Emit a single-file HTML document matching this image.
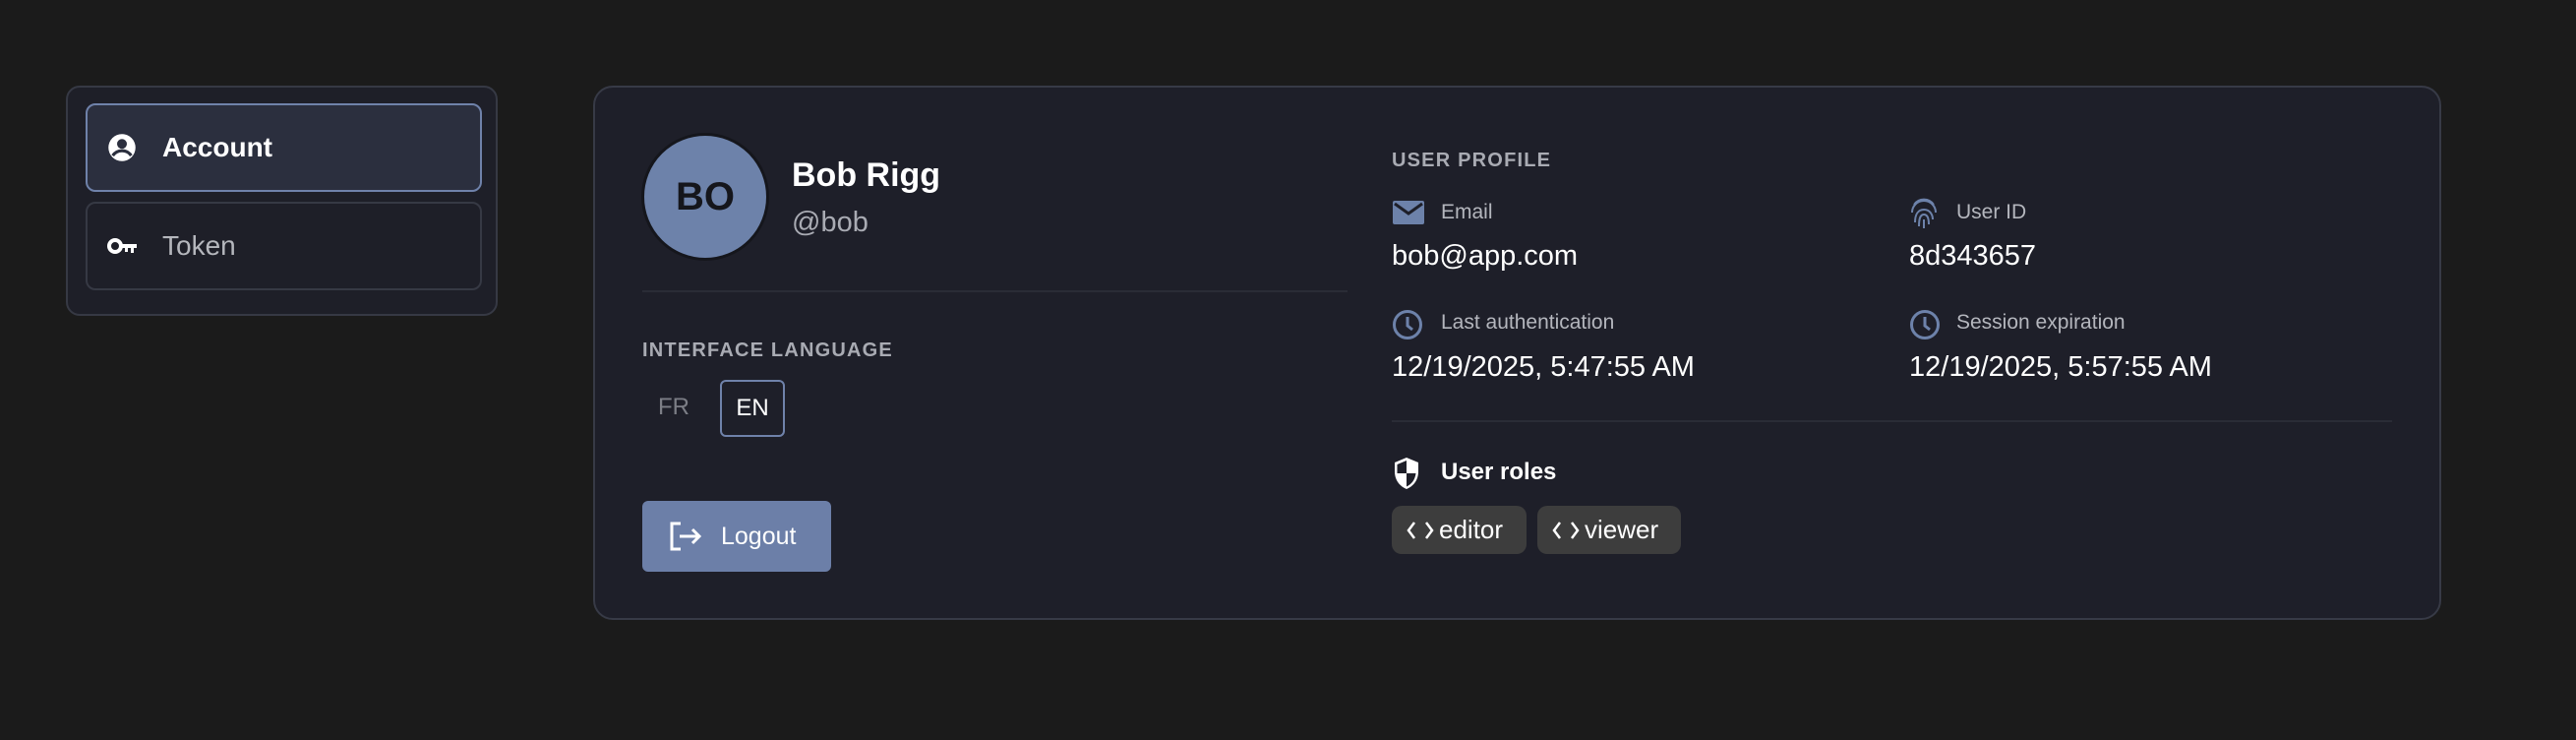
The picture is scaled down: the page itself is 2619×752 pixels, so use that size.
<!DOCTYPE html>
<html><head><style>
*{box-sizing:border-box;margin:0;padding:0}
body{width:2619px;height:752px;background:#1b1b1b;font-family:"Liberation Sans",sans-serif;color:#fff;position:relative;overflow:hidden}
.abs{position:absolute}
.side{left:67px;top:87px;width:439px;height:234px;background:#1e1f28;border:2px solid #363944;border-radius:14px}
.item{position:absolute;left:18px;width:403px;height:90px;border-radius:10px;border:2px solid #363944;display:flex;align-items:center;padding-left:20px;font-size:28px}
.card{left:603px;top:87px;width:1879px;height:543px;background:#1e1f29;border:2px solid #373a46;border-radius:20px}
.lbl{font-size:20px;color:#a9abb3;letter-spacing:1.2px;font-weight:bold}
.sm{font-size:21px;color:#b4b6bd}
.val{font-size:29px;color:#fff}
.chip{position:absolute;top:514px;height:49px;background:#3d3d3d;border-radius:10px;font-size:26px;display:flex;align-items:center;padding-left:14px}
.chip svg{margin-right:4px}
</style></head><body>
<div class="abs side">
 <div class="item" style="top:16px;background:#2b2f3e;border-color:#6f82aa;font-weight:bold">
  <svg width="30" height="30" viewBox="0 0 24 24" style="margin-right:26px"><circle cx="12" cy="12" r="11" fill="#fff"/><circle cx="12" cy="9" r="4" fill="#2b2f3e"/><path d="M4.5 18.5c2-3 4.5-4 7.5-4s5.5 1 7.5 4" stroke="#2b2f3e" stroke-width="2.5" fill="none"/></svg>Account</div>
 <div class="item" style="top:116px;color:#b5b7bd">
  <svg width="32" height="20" viewBox="0 0 32 20" style="margin-right:24px"><circle cx="8" cy="10" r="6" fill="none" stroke="#fff" stroke-width="4"/><path d="M14 8h16v4h-3v5h-3v-5h-3v4h-3v-4h-4z" fill="#fff"/></svg>Token</div>
</div>
<div class="abs card"></div>
<div class="abs" style="left:652px;top:135px;width:130px;height:130px;border-radius:50%;background:#6d82aa;border:3px solid #15161c;display:flex;align-items:center;justify-content:center;color:#15161c;font-size:40px;font-weight:bold">BO</div>
<div class="abs" style="left:805px;top:159px;font-size:34px;font-weight:bold">Bob Rigg</div>
<div class="abs" style="left:805px;top:210px;font-size:29px;color:#a9abb3">@bob</div>
<div class="abs" style="left:653px;top:295px;width:717px;height:2px;background:#2a2c36"></div>
<div class="abs lbl" style="left:653px;top:345px">INTERFACE LANGUAGE</div>
<div class="abs" style="left:669px;top:400px;font-size:24px;color:#7c7e86">FR</div>
<div class="abs" style="left:732px;top:386px;width:66px;height:58px;border:2px solid #6f82aa;border-radius:6px;font-size:24px;display:flex;align-items:center;justify-content:center">EN</div>
<div class="abs" style="left:653px;top:509px;width:192px;height:72px;background:#6c7fa8;border-radius:6px;display:flex;align-items:center;padding-left:26px;font-size:25px">
 <svg width="36" height="32" viewBox="0 0 36 32" style="margin-right:18px"><path d="M13 3H4v26h9" stroke="#fff" stroke-width="3" fill="none"/><path d="M12 16h20M25 9l7 7-7 7" stroke="#fff" stroke-width="3" fill="none"/></svg>Logout</div>

<div class="abs lbl" style="left:1415px;top:152px">USER PROFILE</div>
<svg class="abs" style="left:1416px;top:204px" width="32" height="24" viewBox="0 0 32 24"><rect width="32" height="24" rx="2" fill="#6d82aa"/><path d="M2 3l14 10 14-10" stroke="#1e1f29" stroke-width="3" fill="none"/></svg>
<div class="abs sm" style="left:1465px;top:204px">Email</div>
<div class="abs val" style="left:1415px;top:244px">bob@app.com</div>
<svg class="abs" style="left:1942px;top:200px" width="28" height="34" viewBox="0 0 28 34" fill="none" stroke="#6d82aa" stroke-width="2"><path d="M4 8a12 12 0 0 1 20 0M2 16a12 12 0 0 1 24 0M5 26c0-8 3-13 9-13s9 5 9 10M9 30c0-7 1-12 5-12s5 5 5 10M14 23v9"/></svg>
<div class="abs sm" style="left:1989px;top:204px">User ID</div>
<div class="abs val" style="left:1941px;top:244px">8d343657</div>
<svg class="abs" style="left:1415px;top:314px" width="32" height="32" viewBox="0 0 32 32" fill="none" stroke="#6d82aa" stroke-width="3"><circle cx="16" cy="16" r="13.5"/><path d="M16 8v9l5 4"/></svg>
<div class="abs sm" style="left:1465px;top:316px">Last authentication</div>
<div class="abs val" style="left:1415px;top:357px">12/19/2025, 5:47:55 AM</div>
<svg class="abs" style="left:1941px;top:314px" width="32" height="32" viewBox="0 0 32 32" fill="none" stroke="#6d82aa" stroke-width="3"><circle cx="16" cy="16" r="13.5"/><path d="M16 8v9l5 4"/></svg>
<div class="abs sm" style="left:1989px;top:316px">Session expiration</div>
<div class="abs val" style="left:1941px;top:357px">12/19/2025, 5:57:55 AM</div>
<div class="abs" style="left:1415px;top:427px;width:1017px;height:2px;background:#2a2c36"></div>
<svg class="abs" style="left:1416px;top:464px" width="28" height="34" viewBox="0 0 28 34"><path d="M14 1L2 6v9c0 9 5 15 12 18 7-3 12-9 12-18V6z" fill="#fff"/><path d="M14 4v13H4.5v-9L14 4zM14 17h9.5c-1 7-4.5 11-9.5 13.5z" fill="#1e1f29"/></svg>
<div class="abs" style="left:1465px;top:466px;font-size:24px;font-weight:bold">User roles</div>
<div class="chip" style="left:1415px;width:137px"><svg width="30" height="22" viewBox="0 0 30 22" fill="none" stroke="#fff" stroke-width="2.5"><path d="M9 3L3 11l6 8M21 3l6 8-6 8"/></svg>editor</div>
<div class="chip" style="left:1563px;width:146px"><svg width="30" height="22" viewBox="0 0 30 22" fill="none" stroke="#fff" stroke-width="2.5"><path d="M9 3L3 11l6 8M21 3l6 8-6 8"/></svg>viewer</div>
</body></html>
